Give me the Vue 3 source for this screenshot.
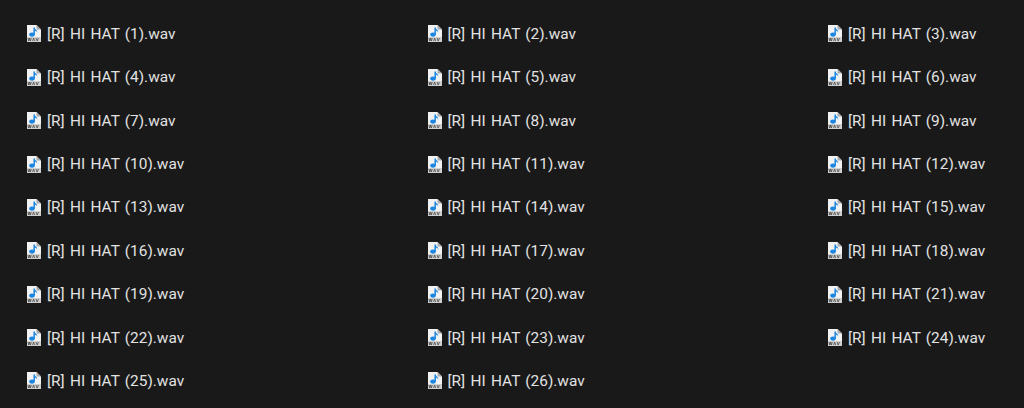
<template>
  <div class="list">
    <div v-for="n in 26" :key="n" class="file">
      <svg class="icon" viewBox="0 0 14 17">
        <path d="M0 0H9.5L14 4.5V17H0Z" fill="#f2f2f2" />
        <path d="M9.5 0V4.5H14Z" fill="#a9a9a9" />
        <rect y="12" width="14" height="5" fill="#cfcfcf" />
        <path d="M1 13l.8 3 .8-3 .8 3 .8-3M5.6 16l1-3 1 3M9 13l1.2 3 1.2-3" fill="none" stroke="#4a4a4a" stroke-width=".8" />
        <path d="M7.2 2.5V9.4" stroke="#1c86e0" stroke-width="1.5" fill="none" />
        <path d="M7.2 2.5C7.8 4.6 10.6 4.8 10.2 7.4C9.6 6.2 8.6 5.8 7.2 5.6Z" fill="#1c86e0" />
        <ellipse cx="5" cy="9.6" rx="2.8" ry="2.1" fill="#1c86e0" />
      </svg>
      <span class="name">[R] HI HAT ({{ n }}).wav</span>
    </div>
  </div>
</template>

<script setup>
</script>

<style>
html, body {
  background: #191919;
}
</style>

<style scoped>
.list {
  display: grid;
  grid-template-columns: 400.5px 400.5px 1fr;
  grid-auto-rows: 43.375px;
  width: 1024px;
  height: 408px;
  box-sizing: border-box;
  padding: 12.3px 0 0 27px;
  background: #191919;
  overflow: hidden;
}

.file {
  display: flex;
  align-items: center;
  gap: 6px;
  height: 43.375px;
}

.icon {
  flex: none;
  width: 14px;
  height: 17px;
}

.name {
  font-family: Roboto, "Open Sans", sans-serif;
  font-size: 15.4px;
  word-spacing: 1.5px;
  color: #e2e2e2;
  white-space: nowrap;
}
</style>
